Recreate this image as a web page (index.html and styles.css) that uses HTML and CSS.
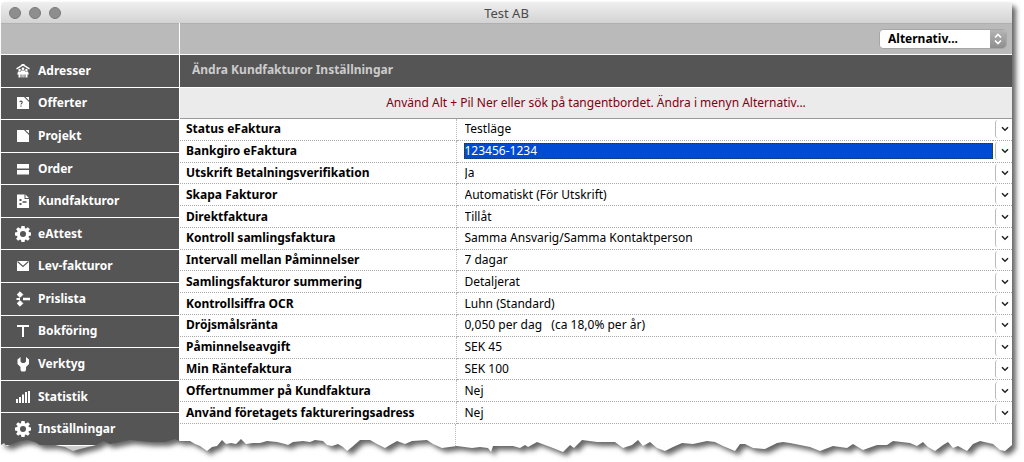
FILE: index.html
```html
<!DOCTYPE html>
<html lang="sv">
<head>
<meta charset="utf-8">
<meta name="viewport" content="width=device-width, initial-scale=1">
<title>Test AB</title>
<link rel="stylesheet" href="styles.css">
</head>
<body>
<svg class="symbols" aria-hidden="true">
  <symbol id="chevron" viewBox="0 0 8 6"><path d="M1 1.2 4 4.2 7 1.2" fill="none" stroke="#222" stroke-width="1.5"/></symbol>
  <symbol id="gear" viewBox="0 0 16 16">
    <path fill="#fff" fill-rule="evenodd" d="M6.4 0h3.2l.4 2.2 1 .4L12.900 1.300l2 2-1.400 1.800.4 1L16 6.500v3l-2.100.400-.4 1 1.300 1.900-2 2-1.900-1.300-1 .4L9.600 16H6.400L6 13.900l-1-.4-1.900 1.300-2-2 1.400-1.900-.4-1L0 9.500v-3l2.100-.4.4-1L1.100 3.300l2-2L5 2.600l1-.4zM8 5a3 3 0 1 0 0 6 3 3 0 0 0 0-6z"/>
  </symbol>
</svg>
<div class="window">
  <header class="titlebar">
    <div class="lights"><button aria-label="Stäng"></button><button aria-label="Minimera"></button><button aria-label="Zooma"></button></div>
    <h1>Test AB</h1>
  </header>
  <div class="toolbar">
    <div class="toolbar-side"></div>
    <div class="toolbar-main">
      <div class="popup">
        <select aria-label="Alternativ"><option>Alternativ...</option></select>
        <span class="popup-arrows"><svg width="8" height="12" viewBox="0 0 8 12"><path d="M1 4.500 4 1.500 7 4.500M1 7.500 4 10.500 7 7.500" fill="none" stroke="#fff" stroke-width="1.600"/></svg></span>
      </div>
    </div>
  </div>
  <div class="content">
    <nav class="sidebar">
      <a href="#"><svg viewBox="0 0 16 16"><path d="M1.500 5.800 8 1.800 14.500 5.800" fill="none" stroke="#fff" stroke-width="1.400"/><g fill="#fff"><path d="M6.500 1h3v1.500h-3z"/><circle cx="8" cy="5.800" r="1.400"/><circle cx="4.600" cy="7" r="1.200"/><circle cx="11.400" cy="7" r="1.200"/><path d="M3 8.500h3V7.500h4v1h3l.8 3H12.500v3h-2v-3h-1v3H8.400v-3h-.8v3H6.500v-3h-1v3h-2v-3H2.200z"/></g></svg>Adresser</a>
      <a href="#"><svg viewBox="0 0 16 16"><path fill="#fff" d="M2 2h7l5 5v7H2zM10.500 2H14v3.500z"/><path d="M4.600 6.800q1.400-1.200 2.600 0 .4 1-.7 1.700-.5.400-.5 1M6 10.600v1.200" fill="none" stroke="#555" stroke-width="1.100"/></svg>Offerter</a>
      <a href="#"><svg viewBox="0 0 16 16"><path fill="#fff" d="M2 2h7l5 5v7H2zM10.500 2H14v3.500z"/></svg>Projekt</a>
      <a href="#"><svg viewBox="0 0 16 16"><path fill="#fff" d="M2 3h12v4.500H2zM2 9h12v4.500H2z"/></svg>Order</a>
      <a href="#"><svg viewBox="0 0 16 16"><path fill="#fff" d="M2 1.500h7.500V6H14v9H2zM10.500 1.500 14 5h-3.500z"/><path fill="#555" d="M4.500 6h2v2h-2zM4.500 10h2v2h-2zM7.500 8.200h4v1.600h-4z"/></svg>Kundfakturor</a>
      <a href="#"><svg><use href="#gear"/></svg>eAttest</a>
      <a href="#"><svg viewBox="0 0 16 16"><path fill="#fff" d="M2 3h12v10H2z"/><path d="M2.500 3.500 8 8.500 13.500 3.500" fill="none" stroke="#555" stroke-width="1.100"/></svg>Lev-fakturor</a>
      <a href="#"><svg viewBox="0 0 16 16"><g fill="#fff"><path d="M5 .8 7.800 3.600 5 6.400 2.200 3.600zM5 9.600l2.800 2.800L5 15.200l-2.800-2.800z" stroke="#fff" stroke-linejoin="round"/><path d="M1.500 7H5v2H1.500zM8 6.800h7v2.400H8z"/></g></svg>Prislista</a>
      <a href="#"><svg viewBox="0 0 16 16"><path fill="#fff" d="M2 2h12v2H9v10H7V4H2z"/></svg>Bokföring</a>
      <a href="#"><svg viewBox="0 0 16 16"><path fill="#fff" d="M5.500 1v4.500L7 7h2.500L11 5.500V1L14 3.500V8l-3 3v3l-1 1.500H6.500L5.500 14v-3l-3-3V3.500z"/></svg>Verktyg</a>
      <a href="#"><svg viewBox="0 0 16 16"><path fill="#fff" d="M1 10h2v4H1zM4 8h2v6H4zM7 5.500h2V14H7zM10 3h2v11h-2zM13 2h2v12h-2z"/></svg>Statistik</a>
      <a href="#"><svg><use href="#gear"/></svg>Inställningar</a>
    </nav>
    <main>
      <h2>Ändra Kundfakturor Inställningar</h2>
      <p class="notice">Använd Alt + Pil Ner eller sök på tangentbordet. Ändra i menyn Alternativ...</p>
      <table class="settings">
        <tbody>
        <tr><th scope="row"><label for="f1">Status eFaktura</label></th><td><input id="f1" value="Testläge"></td><td class="drop"><button aria-label="Välj"><svg><use href="#chevron"/></svg></button></td></tr>
        <tr class="selected"><th scope="row"><label for="f2">Bankgiro eFaktura</label></th><td><input id="f2" value="123456-1234"></td><td class="drop"><button aria-label="Välj"><svg><use href="#chevron"/></svg></button></td></tr>
        <tr><th scope="row"><label for="f3">Utskrift Betalningsverifikation</label></th><td><input id="f3" value="Ja"></td><td class="drop"><button aria-label="Välj"><svg><use href="#chevron"/></svg></button></td></tr>
        <tr><th scope="row"><label for="f4">Skapa Fakturor</label></th><td><input id="f4" value="Automatiskt (För Utskrift)"></td><td class="drop"><button aria-label="Välj"><svg><use href="#chevron"/></svg></button></td></tr>
        <tr><th scope="row"><label for="f5">Direktfaktura</label></th><td><input id="f5" value="Tillåt"></td><td class="drop"><button aria-label="Välj"><svg><use href="#chevron"/></svg></button></td></tr>
        <tr><th scope="row"><label for="f6">Kontroll samlingsfaktura</label></th><td><input id="f6" value="Samma Ansvarig/Samma Kontaktperson"></td><td class="drop"><button aria-label="Välj"><svg><use href="#chevron"/></svg></button></td></tr>
        <tr><th scope="row"><label for="f7">Intervall mellan Påminnelser</label></th><td><input id="f7" value="7 dagar"></td><td class="drop"><button aria-label="Välj"><svg><use href="#chevron"/></svg></button></td></tr>
        <tr><th scope="row"><label for="f8">Samlingsfakturor summering</label></th><td><input id="f8" value="Detaljerat"></td><td class="drop"><button aria-label="Välj"><svg><use href="#chevron"/></svg></button></td></tr>
        <tr><th scope="row"><label for="f9">Kontrollsiffra OCR</label></th><td><input id="f9" value="Luhn (Standard)"></td><td class="drop"><button aria-label="Välj"><svg><use href="#chevron"/></svg></button></td></tr>
        <tr><th scope="row"><label for="f10">Dröjsmålsränta</label></th><td><input id="f10" value="0,050 per dag   (ca 18,0% per år)"></td><td class="drop"><button aria-label="Välj"><svg><use href="#chevron"/></svg></button></td></tr>
        <tr><th scope="row"><label for="f11">Påminnelseavgift</label></th><td><input id="f11" value="SEK 45"></td><td class="drop"><button aria-label="Välj"><svg><use href="#chevron"/></svg></button></td></tr>
        <tr><th scope="row"><label for="f12">Min Räntefaktura</label></th><td><input id="f12" value="SEK 100"></td><td class="drop"><button aria-label="Välj"><svg><use href="#chevron"/></svg></button></td></tr>
        <tr><th scope="row"><label for="f13">Offertnummer på Kundfaktura</label></th><td><input id="f13" value="Nej"></td><td class="drop"><button aria-label="Välj"><svg><use href="#chevron"/></svg></button></td></tr>
        <tr><th scope="row"><label for="f14">Använd företagets faktureringsadress</label></th><td><input id="f14" value="Nej"></td><td class="drop"><button aria-label="Välj"><svg><use href="#chevron"/></svg></button></td></tr>
        </tbody>
      </table>
      <div class="rest"></div>
    </main>
  </div>
</div>
<svg class="tear" viewBox="0 0 1024 32" preserveAspectRatio="none" aria-hidden="true">
  <defs>
    <filter id="soft" x="-5%" y="-50%" width="110%" height="200%"><feGaussianBlur stdDeviation="2.500"/></filter>
    <path id="edge" d="M1012-60H1V14L4 12 7 15 20 10 28 9 35 11 40 14 55 14 65 16 73 20 80 18 88 16 96 14 103 10 110 13 120 11 130 9 150 11 165 11 175 8 180 10 190 10 195 13 200 15 207 20 212 16 217 15 222 9 226 13 231 12 236 13 241 8 246 13 253 12 260 12 267 10 277 11 285 13 288 14 293 11 303 10 310 11 315 9 323 10 327 14 332 15 338 13 343 16 347 20 352 16 360 9 370 9 377 13 385 17 390 14 397 10 405 13 412 10 427 9 433 13 442 17 457 15 472 17 480 16 488 17 491 21 493 15 513 15 520 17 525 14 528 16 537 11 545 14 553 17 563 21 570 14 574 17 582 9 597 11 615 11 623 17 632 14 638 9 643 15 650 11 657 17 665 20 673 16 682 12 693 13 707 10 715 11 723 15 735 20 740 13 745 13 753 17 765 18 777 12 783 11 790 12 800 14 810 16 820 20 833 15 847 17 853 13 863 19 877 14 887 14 893 10 910 12 917 15 923 11 928 16 935 20 943 14 948 11 953 17 958 15 967 20 973 13 980 10 993 13 1000 19 1005 20 1012 14Z"/>
    <mask id="outside"><rect width="1024" height="32" fill="#fff"/><use href="#edge" fill="#000"/></mask>
  </defs>
  <g mask="url(#outside)"><rect width="1024" height="32" fill="#fff"/><use href="#edge" class="tear-shadow" transform="translate(4 4)" filter="url(#soft)"/></g>
</svg>
</body>
</html>
```
FILE: styles.css
```css
* { box-sizing: border-box; }
body {
  margin: 0;
  position: relative;
  min-height: 100vh;
  overflow: hidden;
  background: #fff;
  font-family: "Noto Sans", "Open Sans", sans-serif;
  font-size: 12px;
  line-height: 16px;
  color: #000;
}
.symbols { position: absolute; width: 0; height: 0; }
button, input, select { font: inherit; color: inherit; border: 0; padding: 0; background: none; }

.window {
  margin: 2px 12px 0 1px;
  border-radius: 4px 4px 0 0;
  box-shadow: 4px 4px 5px #666;
}
.titlebar {
  display: grid;
  grid-template-columns: 1fr auto 1fr;
  align-items: center;
  height: 21px;
  border-radius: 4px 4px 0 0;
  background: linear-gradient(#efefef, #d3d3d3);
}
.titlebar h1 { margin: 0; font-size: 13px; font-weight: 400; color: #4a4a4a; }
.lights { display: flex; gap: 8px; padding-left: 8px; }
.lights button { width: 12px; height: 12px; border-radius: 50%; background: #8e8e8e; border: 1px solid #7a7a7a; }

.toolbar, .content { display: grid; grid-template-columns: 178px 1fr; column-gap: 1px; }
.toolbar { background: #fff; border-bottom: 1px solid #fff; }
.toolbar > div { background: #bababa; border-top: 1px solid #b0b0b0; }
.toolbar-main { display: flex; justify-content: flex-end; padding: 5px 5px; }
.popup {
  position: relative;
  width: 128px;
  height: 20px;
  border-radius: 4px;
  background: #fff;
  border: 1px solid #a6a6a6;
  overflow: hidden;
}
.popup select { appearance: none; width: 100%; height: 18px; padding-left: 8px; font-weight: 700; }
.popup-arrows {
  position: absolute;
  inset: 0 0 0 auto;
  width: 16px;
  display: grid;
  place-items: center;
  background: linear-gradient(#b4b4b4, #8e8e8e);
  pointer-events: none;
}

.content { background: #fff; }
.sidebar { display: grid; grid-template-rows: repeat(12, 1fr); padding-bottom: 6px; background: #ccc; }
.sidebar a {
  display: flex;
  align-items: center;
  gap: 7px;
  padding-left: 14px;
  background: #555;
  border-bottom: 1px solid #fff;
  color: #fff;
  font-weight: 700;
  text-decoration: none;
}
.sidebar svg { width: 16px; height: 16px; }

main { display: flex; flex-direction: column; min-width: 0; }
h2 {
  margin: 0 0 1px;
  padding: 7px 12px 9px;
  background: #555;
  color: #ccc;
  font-size: 12px;
  font-weight: 700;
}
.notice {
  margin: 0;
  padding: 7px 0;
  background: #ebebeb;
  border-bottom: 1px solid #999;
  text-align: center;
  color: #800010;
}
.settings { width: 100%; height: 305px; border-collapse: collapse; table-layout: fixed; }
.settings th, .settings td { padding: 0; border-bottom: 1px dotted #aaa; vertical-align: middle; }
.settings th { width: 276px; padding-left: 6px; text-align: left; font-weight: 700; border-right: 1px dotted #bbb; }
.settings td { padding-left: 7px; }
.settings input { display: block; width: 100%; height: 16px; padding-left: 1px; }
.selected input { background: #004bd3; color: #fff; outline: 1px dotted #333; outline-offset: -1px; }
.settings .drop { width: 19px; padding: 1px 0 1px 2px; }
.drop button {
  display: grid;
  place-items: center;
  width: 17px;
  height: 18px;
  padding-left: 2px;
  border-left: 1px solid #bbb;
  border-radius: 3px 0 0 3px;
}
.drop svg { width: 8px; height: 6px; }
.rest { height: 28px; width: 276px; border-right: 1px dotted #bbb; }

/* Torn lower edge lies over the window's bottom rows */
.tear { position: absolute; left: 0; top: 431px; width: 100%; height: 32px; }
.tear-shadow { fill: #666; }
```
